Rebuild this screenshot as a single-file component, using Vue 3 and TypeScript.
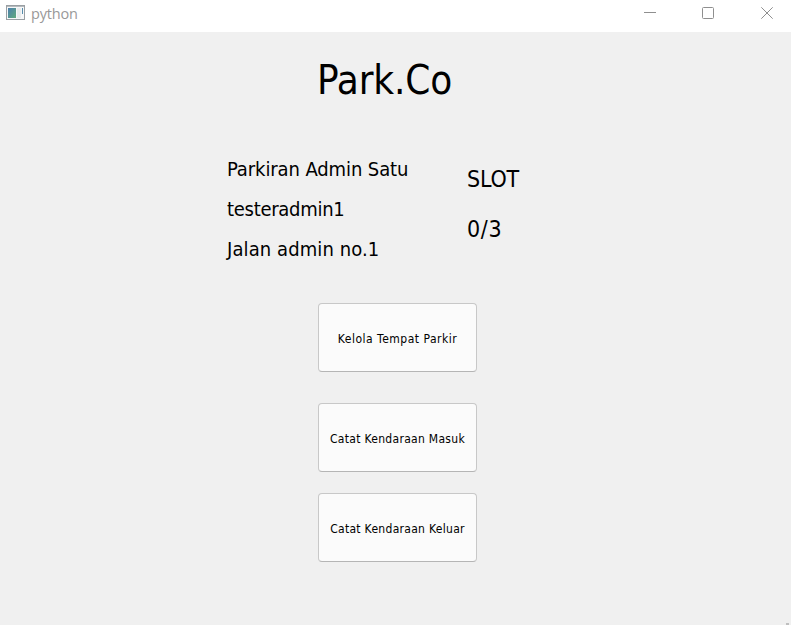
<script setup lang="ts">
const details: string[] = ['Parkiran Admin Satu', 'testeradmin1', 'Jalan admin no.1']
const actions: string[] = ['Kelola Tempat Parkir', 'Catat Kendaraan Masuk', 'Catat Kendaraan Keluar']
</script>

<template>
  <div class="window">
    <header class="titlebar">
      <svg class="app-icon" width="19" height="16" viewBox="0 0 19 16">
        <defs>
          <linearGradient id="pane" x1="0" y1="0" x2="1" y2="1">
            <stop offset="0" stop-color="#4c7fae" />
            <stop offset="1" stop-color="#62ab7d" />
          </linearGradient>
        </defs>
        <rect x="0.5" y="0.5" width="18" height="14" fill="#f6f7f8" stroke="#9a9fa3" />
        <path d="M1 1.5H18" stroke="#b5babd" />
        <rect x="2" y="3" width="8" height="10" fill="url(#pane)" />
        <rect x="11" y="3" width="4" height="10" fill="#e8ebec" />
        <path d="M16.5 3V9" stroke="#568dac" />
      </svg>
      <span class="caption">python</span>
      <div class="controls">
        <svg width="12" height="12" viewBox="0 0 12 12"><path d="M0 5.5H12" /></svg>
        <svg width="12" height="12" viewBox="0 0 12 12"><rect x=".5" y=".5" width="11" height="11" rx="1" /></svg>
        <svg width="12" height="12" viewBox="0 0 12 12"><path d="M.3.3 11.7 11.7M11.7.3.3 11.7" /></svg>
      </div>
    </header>
    <main class="content">
      <h1>Park.Co</h1>
      <section class="info">
        <div class="details">
          <p v-for="line in details" :key="line">{{ line }}</p>
        </div>
        <div class="slot-info">
          <p>SLOT</p>
          <p>0/3</p>
        </div>
      </section>
      <nav class="actions">
        <button v-for="action in actions" :key="action" type="button">{{ action }}</button>
      </nav>
      <i class="grip"></i>
    </main>
  </div>
</template>

<style>
body {
  margin: 0;
}
</style>

<style scoped>
.window {
  width: 791px;
  height: 625px;
  overflow: hidden;
  display: flex;
  flex-direction: column;
  background: #f0f0f0;
  color: #000;
  font-family: "DejaVu Sans Condensed", "DejaVu Sans", sans-serif;
  font-stretch: condensed;
}
.titlebar {
  box-sizing: border-box;
  flex: none;
  height: 32px;
  display: flex;
  align-items: flex-start;
  padding: 5px 18px 0 6px;
  background: #fff;
}
.caption {
  margin-left: 6px;
  font: 14.5px/18px "Open Sans", sans-serif;
  letter-spacing: -0.2px;
  color: #999;
}
.controls {
  display: flex;
  gap: 46px;
  margin: 2px 0 0 auto;
}
.controls svg {
  fill: none;
  stroke: #8f8f8f;
  stroke-width: 1;
}
.controls svg:last-child {
  margin-left: 1px;
}
.content {
  position: relative;
  flex: 1;
}
h1 {
  margin: 18px 0 0 317px;
  font-size: 40px;
  line-height: 60px;
  font-weight: 400;
  letter-spacing: -0.15px;
}
.info {
  display: flex;
  margin: 39px 0 0 227px;
}
.details {
  width: 240px;
}
p {
  margin: 0;
  white-space: nowrap;
}
.details p {
  font-size: 20px;
  line-height: 40px;
  letter-spacing: -0.1px;
}
.details p:nth-child(2) {
  letter-spacing: -0.28px;
}
.details p:nth-child(3) {
  letter-spacing: 0.1px;
}
.slot-info {
  padding-top: 5px;
}
.slot-info p {
  font-size: 23px;
  line-height: 50px;
  letter-spacing: -0.2px;
}
.slot-info p:last-child {
  letter-spacing: 0.7px;
}
.actions {
  display: flex;
  flex-direction: column;
  margin: 34px 0 0 318px;
}
button {
  box-sizing: border-box;
  width: 159px;
  height: 69px;
  padding: 2px 0 0;
  border: 1px solid #c8c8c8;
  border-bottom-color: #b5b5b5;
  border-radius: 4px;
  background: #fbfbfb;
  color: #000;
  font: inherit;
  font-size: 12px;
  letter-spacing: 0.3px;
  white-space: nowrap;
}
button:first-child {
  letter-spacing: 0.5px;
}
button:nth-child(2) {
  margin: 31px 0 21px;
}
.grip {
  position: absolute;
  right: 2px;
  bottom: 0;
  width: 3px;
  height: 2px;
  background: #bfbfbf;
}
</style>
